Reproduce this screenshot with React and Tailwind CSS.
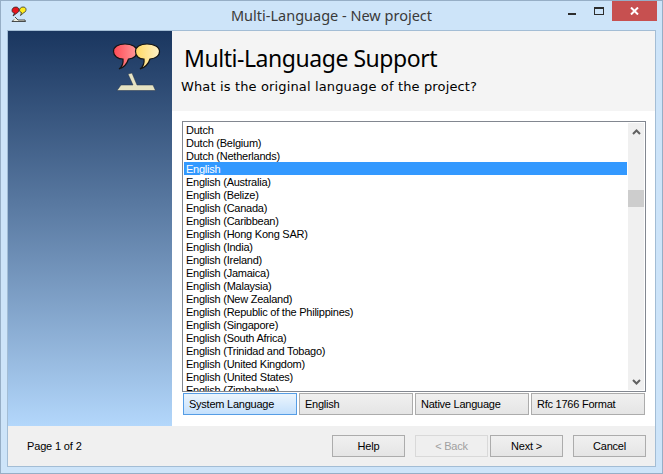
import React from 'react';

const languages = [
  'Dutch',
  'Dutch (Belgium)',
  'Dutch (Netherlands)',
  'English',
  'English (Australia)',
  'English (Belize)',
  'English (Canada)',
  'English (Caribbean)',
  'English (Hong Kong SAR)',
  'English (India)',
  'English (Ireland)',
  'English (Jamaica)',
  'English (Malaysia)',
  'English (New Zealand)',
  'English (Republic of the Philippines)',
  'English (Singapore)',
  'English (South Africa)',
  'English (Trinidad and Tobago)',
  'English (United Kingdom)',
  'English (United States)',
  'English (Zimbabwe)',
];

const columns = ['System Language', 'English', 'Native Language', 'Rfc 1766 Format'];

// Speech bubbles on a stand, shown in the sidebar
function Logo() {
  return (
    <svg width="52" height="50" viewBox="0 0 52 50">
      <defs>
        <linearGradient id="redBubble" x1="0" y1="0" x2="1" y2="0">
          <stop offset="0" stopColor="#ff4a55" />
          <stop offset="1" stopColor="#ff9a9a" />
        </linearGradient>
        <linearGradient id="yellowBubble" x1="0" y1="0" x2="1" y2="0">
          <stop offset="0" stopColor="#ffd862" />
          <stop offset="1" stopColor="#fff2c8" />
        </linearGradient>
      </defs>
      <path d="M13 1C6 1 1.500 4 1.500 8.500C1.500 13 6 16 11 16C11.500 20 10.500 23.500 7 26C12 24.500 15 21 16.500 16C21 15.500 25 13 25 8.500C25 4 20 1 13 1Z" fill="url(#redBubble)" stroke="#141414" strokeWidth="1.200" />
      <path d="M35 1C28 1 23.500 4 23.500 8.500C23.500 13 27 16 32 16C32.500 20 31.500 23.500 28 26C33 24.500 36.500 21 38 16C43 15.500 47.500 13 47.500 8.500C47.500 4 42 1 35 1Z" fill="url(#yellowBubble)" stroke="#141414" strokeWidth="1.200" />
      <path d="M16 31L20 30L25 42L41 42L43.500 47.500L5 47.500L9 42L21 42Z" fill="#e6e3c3" stroke="#23304a" strokeWidth="0.500" />
    </svg>
  );
}

function TitleIcon() {
  return (
    <svg width="17" height="17" viewBox="0 0 17 17">
      <path d="M6 1C3 1 2 3 2 4.500C2 6 3 7 4.500 7L3 10L7 7C8 6.500 9 5.500 9 4C9 2.500 8 1 6 1Z" fill="#e8141c" stroke="#1a1a1a" strokeWidth="0.700" />
      <path d="M13 1C11 1 9.500 2.500 9.500 4C9.500 5.500 10.500 6.500 11.500 6.500L10.500 9.500L14 6.500C15.500 6 16 5 16 3.500C16 2 15 1 13 1Z" fill="#ffec1e" stroke="#1a1a1a" strokeWidth="0.700" />
      <path d="M5 11L8 14L15 14L15.500 15.500L2 15.500L4 13.500" fill="#efeee0" stroke="#222" strokeWidth="0.800" />
    </svg>
  );
}

function WizardButton({ label, disabled, className }) {
  return (
    <button
      className={`w-[73px] h-[22px] flex items-center justify-center border text-[11px] tracking-[-0.2px] ${
        disabled
          ? 'border-[#d9d9d9] bg-[#efefef] text-[#a0a0a0]'
          : 'border-[#acacac] bg-gradient-to-b from-[#f0f0f0] to-[#e5e5e5] text-black'
      } ${className}`}
    >
      {label}
    </button>
  );
}

export default function App() {
  return (
    <div className="w-[663px] h-[474px] flex flex-col bg-[#cde4f9] border border-[#96aec6] overflow-hidden font-['Liberation_Sans',sans-serif] text-[11px] text-black">
      {/* Title bar */}
      <div className="h-[29px] shrink-0 flex items-start">
        <div className="w-[104px] pl-[9px] pt-[5px]">
          <TitleIcon />
        </div>
        <div className="flex-1 text-center pt-[4px] text-[14.5px] leading-[20px] text-[#3a3a3a] font-['Noto_Sans',sans-serif]">
          Multi-Language - New project
        </div>
        <div className="w-[104px] flex items-start">
          <div className="w-[28px] h-[20px] flex justify-center pt-[12px]">
            <div className="w-[8px] h-[2px] bg-[#2d2d2d]" />
          </div>
          <div className="w-[26px] h-[20px] flex justify-center pt-[6px]">
            <div className="w-[10px] h-[8px] border border-t-2 border-[#2d2d2d]" />
          </div>
          <div className="w-[45px] h-[20px] bg-[#c75050] flex items-center justify-center">
            <svg width="9" height="8" viewBox="0 0 9 8">
              <path d="M1 0.500L8 7.500M8 0.500L1 7.500" stroke="#fff" strokeWidth="2" />
            </svg>
          </div>
        </div>
      </div>

      {/* Client area */}
      <div className="flex-1 mx-[6px] mb-[6px] flex flex-col border border-[#a3bdd5] min-h-0">
        <div className="flex-1 flex min-h-0">
          {/* Gradient sidebar */}
          <div className="w-[164px] shrink-0 bg-gradient-to-b from-[#1a365f] to-[#b3d7fb] flex justify-end pt-[12px] pr-[8px]">
            <Logo />
          </div>

          <div className="flex-1 flex flex-col bg-white min-w-0">
            <div className="h-[80px] shrink-0 bg-[#f4f4f4] pl-[9px] pt-[12px]">
              <div className="pl-[3px] text-[23px] leading-[30px] tracking-[-0.45px] font-['Noto_Sans',sans-serif]">
                Multi-Language Support
              </div>
              <div className="text-[13px] leading-[18px] pt-[5px] tracking-[0.14px] font-['DejaVu_Sans',sans-serif]">
                What is the original language of the project?
              </div>
            </div>

            <div className="flex-1 flex flex-col pt-[10px] pl-[10px] pr-[9px]">
              {/* Language list */}
              <div className="h-[271px] shrink-0 border border-[#828790] flex overflow-hidden">
                <div className="flex-1 pl-[1px] pt-[1px] overflow-hidden">
                  {languages.map((name) => (
                    <div
                      key={name}
                      className={`h-[13px] leading-[14px] pl-[2px] whitespace-nowrap tracking-[-0.24px] ${
                        name === 'English' ? 'bg-[#3399ff] text-white' : ''
                      }`}
                    >
                      {name}
                    </div>
                  ))}
                </div>
                <div className="w-[16px] shrink-0 bg-[#f0f0f0] flex flex-col ml-[1px] mr-[1px] my-[1px]">
                  <div className="h-[17px] flex items-center justify-center">
                    <svg width="9" height="6" viewBox="0 0 9 6">
                      <path d="M1 5L4.500 1.500L8 5" fill="none" stroke="#606060" strokeWidth="2" />
                    </svg>
                  </div>
                  <div className="h-[17px] mt-[50px] bg-[#cdcdcd]" />
                  <div className="flex-1" />
                  <div className="h-[17px] flex items-center justify-center">
                    <svg width="9" height="6" viewBox="0 0 9 6">
                      <path d="M1 1L4.500 4.500L8 1" fill="none" stroke="#606060" strokeWidth="2" />
                    </svg>
                  </div>
                </div>
              </div>

              {/* Column selector */}
              <div className="flex gap-[2px] mt-[1px] ml-[1px]">
                {columns.map((col, i) => (
                  <div
                    key={col}
                    className={`w-[114px] h-[22px] flex items-center pl-[5px] border tracking-[-0.24px] ${
                      i === 0
                        ? 'border-[#569de5] bg-gradient-to-b from-[#ecf5fd] to-[#c4e0fc]'
                        : 'border-[#acacac] bg-gradient-to-b from-[#f0f0f0] to-[#e5e5e5]'
                    }`}
                  >
                    {col}
                  </div>
                ))}
              </div>
            </div>
          </div>
        </div>

        {/* Footer */}
        <div className="h-[40px] shrink-0 bg-[#f0f0f0] flex items-center pl-[19px] pr-[9px]">
          <div className="flex-1 tracking-[-0.15px]">Page 1 of 2</div>
          <WizardButton label="Help" className="mr-[10px]" />
          <WizardButton label="< Back" disabled className="mr-[2px]" />
          <WizardButton label="Next >" className="mr-[10px]" />
          <WizardButton label="Cancel" />
        </div>
      </div>
    </div>
  );
}
